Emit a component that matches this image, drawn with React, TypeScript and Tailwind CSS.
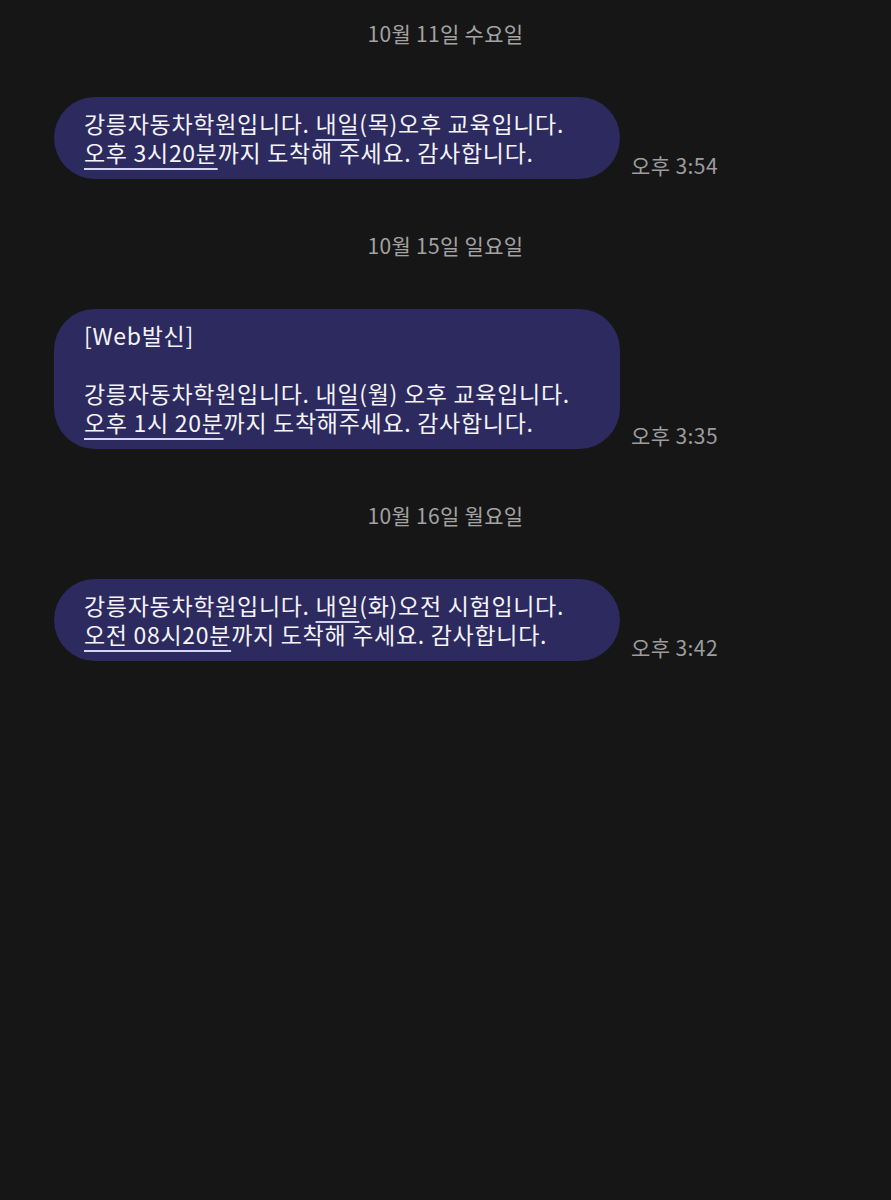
import React from 'react';

type Msg = {
  date: string;
  time: string;
  lines: React.ReactNode[];
};

const U = ({ children }: { children: React.ReactNode }) => (
  <span className="underline decoration-[#d6d4f2] decoration-2 underline-offset-[6px]">{children}</span>
);

const messages: Msg[] = [
  {
    date: '10월 11일 수요일',
    time: '오후 3:54',
    lines: [
      <>강릉자동차학원입니다. <U>내일</U>(목)오후 교육입니다.</>,
      <><U>오후 3시20분</U>까지 도착해 주세요. 감사합니다.</>,
    ],
  },
  {
    date: '10월 15일 일요일',
    time: '오후 3:35',
    lines: [
      <>[Web발신]</>,
      <>&nbsp;</>,
      <>강릉자동차학원입니다. <U>내일</U>(월) 오후 교육입니다.</>,
      <><U>오후 1시 20분</U>까지 도착해주세요. 감사합니다.</>,
    ],
  },
  {
    date: '10월 16일 월요일',
    time: '오후 3:42',
    lines: [
      <>강릉자동차학원입니다. <U>내일</U>(화)오전 시험입니다.</>,
      <><U>오전 08시20분</U>까지 도착해 주세요. 감사합니다.</>,
    ],
  },
];

export default function App() {
  return (
    <div
      className="min-h-[1200px] w-full bg-[#161616] pt-[18px]"
      style={{ fontFamily: '"Noto Sans CJK KR", "Noto Sans", sans-serif' }}
    >
      {messages.map((m, i) => (
        <div key={i} className={i > 0 ? 'mt-[51px]' : ''}>
          <div className="h-[30px] text-center text-[21px] leading-[30px] tracking-[0.3px] text-[#a3a3a3]">{m.date}</div>
          <div className="mt-[49px] flex items-end pl-[54px]">
            <div className="w-[566px] rounded-[41px] bg-[#2c2a5e] px-[30px] py-3 text-[23px] leading-[29px] tracking-[0.7px] text-[#f4f4f8]">
              {m.lines.map((l, j) => (
                <div key={j} className="whitespace-pre">{l}</div>
              ))}
            </div>
            <div className="ml-[11px] text-[21px] leading-[28px] tracking-[0.4px] text-[#9d9d9d]">{m.time}</div>
          </div>
        </div>
      ))}
    </div>
  );
}
